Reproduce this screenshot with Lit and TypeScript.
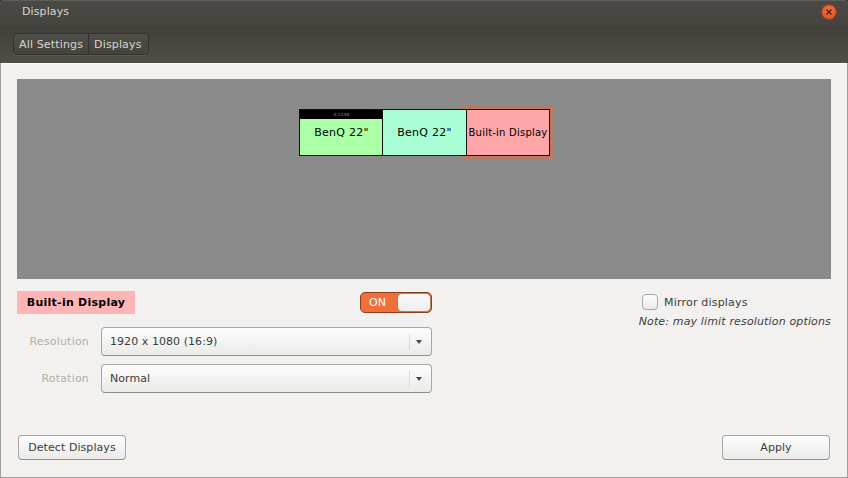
import { LitElement, html, css } from "lit";
import { customElement } from "lit/decorators.js";

@customElement("app-root")
export class AppRoot extends LitElement {
  static styles = css`
    :host { display: block; width: 848px; height: 478px; overflow: hidden; background: #3c3b37; font-family: "DejaVu Sans", sans-serif; font-size: 11px; color: #3c3c3c; }
    * { box-sizing: border-box; }
    .window { height: 478px; display: flex; flex-direction: column; border-radius: 5px 5px 0 0; overflow: hidden; background: #a09e99; padding: 0 1px 1px 1px; }
    .head { margin: 0 -1px; height: 63px; flex: none; background: linear-gradient(#4a4945 0, #45443f 24px, #403f3a 25px, #4f4e46 62px); border-top: 1px solid #5e5d58; display: flex; flex-direction: column; position: relative; }
    .titlebar { height: 21px; padding-left: 22px; display: flex; align-items: center; color: #d8d4cc; font-size: 11px; letter-spacing: 0.1px; }
    .close { position: absolute; top: 3px; right: 11px; width: 16px; height: 16px; border-radius: 50%; background: radial-gradient(circle at 50% 35%, #f2703f, #d9501f); border: 1px solid #8e3d1d; display: flex; align-items: center; justify-content: center; }
    .crumbs { margin: 11px 0 0 13px; display: inline-flex; align-self: flex-start; height: 22px; border: 1px solid #33322e; border-radius: 4px; background: linear-gradient(#4f4e48, #45443e); box-shadow: 0 1px 0 #5a5952; color: #d8d6cd; letter-spacing: 0.15px; }
    .crumbs span { display: flex; align-items: center; padding: 0 5px; }
    .crumbs span + span { border-left: 1px solid #33322e; padding-right: 6px; }
    .body { flex: 1; background: #f2f1f0; border-top: 1px solid #fbfbfb; padding: 15px 16px 0 16px; display: flex; flex-direction: column; }
    .preview { height: 200px; flex: none; background: #8a8a8a; position: relative; }
    .mon { position: absolute; top: 30px; height: 47px; border: 1.5px solid #111; display: flex; flex-direction: column; color: #000; }
    .mon .panel { position: absolute; top: 0; left: 0; right: 0; height: 9px; background: #000; color: #999; font-size: 4px; display: flex; align-items: center; justify-content: center; }
    .mon .name { flex: 1; display: flex; align-items: center; justify-content: center; white-space: nowrap; letter-spacing: 0.25px; padding-bottom: 1px; }
    .m1 { left: 282px; width: 85px; background: #abffa6; }
    .m2 { left: 365px; width: 85px; background: #a8ffd6; }
    .m3 { left: 449px; width: 84px; background: #ffa6a8; font-size: 10px; }
    .m3 .name { letter-spacing: 0.22px; }
    .halo { position: absolute; left: 445px; top: 26px; width: 91px; height: 54px; background: #b97a66; }
    .controls { margin-top: 12px; display: flex; justify-content: space-between; height: 144px; }
    .left { width: 415px; display: flex; flex-direction: column; }
    .top { display: flex; justify-content: space-between; align-items: center; height: 23px; }
    .badge { width: 118px; height: 23px; background: #ffb5b5; color: #000; font-weight: bold; display: flex; align-items: center; justify-content: center; letter-spacing: 0.25px; }
    .switch { width: 72px; height: 21px; border: 1px solid #8e3d1d; border-radius: 5px; background: #ef703a; color: #fff; display: flex; align-items: center; overflow: hidden; }
    .switch .on { width: 36px; padding-left: 8px; }
    .switch .knob { flex: 1; height: 100%; background: linear-gradient(#fafafa, #eeeded); border: 1px solid #b0805f; border-radius: 5px; }
    .grid { margin-top: 13px; display: grid; grid-template-columns: 72px 1fr; column-gap: 12px; row-gap: 8px; }
    .lbl { color: #b5aea4; display: flex; align-items: center; justify-content: flex-end; letter-spacing: 0.2px; }
    .combo { height: 29px; border: 1px solid #a9a7a3; border-bottom-color: #8f8d89; border-radius: 4px; background: linear-gradient(#fdfdfd, #ebeae9); display: flex; align-items: center; padding-left: 8px; letter-spacing: 0.06px; }
    .combo .val { flex: 1; }
    .combo .arrow { width: 22px; height: 16px; border-left: 1px solid #d9d8d6; display: flex; align-items: center; padding-left: 6px; }
    .tri { width: 0; height: 0; border-left: 3px solid transparent; border-right: 3px solid transparent; border-top: 4px solid #4a4a4a; }
    .right { display: flex; flex-direction: column; align-items: flex-end; }
    .mirror { display: flex; align-items: center; gap: 6px; height: 16px; margin: 3px 0 5px 0; width: 189px; color: #3c3c3c; letter-spacing: 0.2px; }
    .check { width: 16px; height: 16px; flex: none; border: 1px solid #a9a7a3; border-radius: 4px; background: linear-gradient(#fdfdfd, #ecebea); }
    .note { font-style: italic; color: #3c3c3c; white-space: nowrap; letter-spacing: 0.15px; }
    .foot { flex: 1; display: flex; justify-content: space-between; align-items: flex-start; padding: 0 1px 0 1px; }
    .btn { height: 25px; border: 1px solid #a9a7a3; border-bottom-color: #8f8d89; border-radius: 4px; background: linear-gradient(#fdfdfd, #ebeae9); display: flex; align-items: center; justify-content: center; letter-spacing: 0.07px; }
    .detect { width: 108px; }
    .apply { width: 108px; }
  `;

  render() {
    return html`
      <div class="window">
        <div class="head">
          <div class="titlebar">Displays</div>
          <div class="close">
            <svg width="8" height="8" viewBox="0 0 8 8"><path d="M1.5 1.5 6.5 6.5M6.5 1.5 1.5 6.5" stroke="#4a2010" stroke-width="1.3" fill="none"/></svg>
          </div>
          <div class="crumbs"><span>All Settings</span><span>Displays</span></div>
        </div>
        <div class="body">
          <div class="preview">
            <div class="halo"></div>
            <div class="mon m1"><div class="name">BenQ 22"</div><div class="panel">0:13:58</div></div>
            <div class="mon m2"><div class="name">BenQ 22"</div></div>
            <div class="mon m3"><div class="name">Built-in Display</div></div>
          </div>
          <div class="controls">
            <div class="left">
              <div class="top">
                <div class="badge">Built-in Display</div>
                <div class="switch"><div class="on">ON</div><div class="knob"></div></div>
              </div>
              <div class="grid">
                <div class="lbl">Resolution</div>
                <div class="combo"><div class="val">1920 x 1080 (16:9)</div><div class="arrow"><div class="tri"></div></div></div>
                <div class="lbl">Rotation</div>
                <div class="combo"><div class="val">Normal</div><div class="arrow"><div class="tri"></div></div></div>
              </div>
            </div>
            <div class="right">
              <div class="mirror"><div class="check"></div><span>Mirror displays</span></div>
              <div class="note">Note: may limit resolution options</div>
            </div>
          </div>
          <div class="foot">
            <div class="btn detect">Detect Displays</div>
            <div class="btn apply">Apply</div>
          </div>
        </div>
      </div>
    `;
  }
}
